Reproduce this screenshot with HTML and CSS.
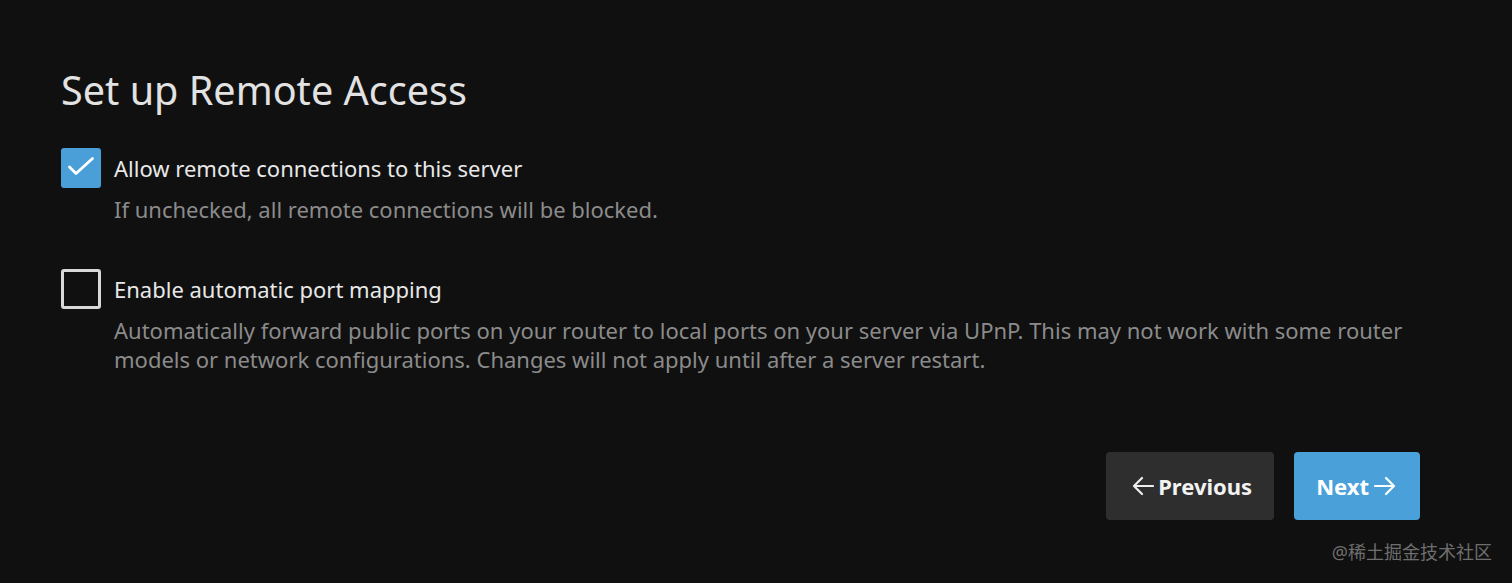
FILE: index.html
```html
<!DOCTYPE html>
<html lang="en">
<head>
    <meta charset="UTF-8">
    <title>Set up Remote Access</title>
    <link rel="stylesheet" href="styles.css">
</head>
<body>
    <div class="wizard">
        <h1>Set up Remote Access</h1>

        <div class="option first">
            <span class="box checked">
                <svg viewBox="0 0 28 28" width="28" height="28"><path d="M2.5 13l6.5 6.5L25.5 4.5" fill="none" stroke="#fff" stroke-width="2.8" stroke-linecap="round" stroke-linejoin="round"/></svg>
            </span>
            <div class="text">
                <div class="label">Allow remote connections to this server</div>
                <div class="hint">If unchecked, all remote connections will be blocked.</div>
            </div>
        </div>

        <div class="option">
            <span class="box"></span>
            <div class="text">
                <div class="label">Enable automatic port mapping</div>
                <div class="hint">Automatically forward public ports on your router to local ports on your server via UPnP. This may not work with some router models or network configurations. Changes will not apply until after a server restart.</div>
            </div>
        </div>

        <div class="actions">
            <button class="btn prev">
                <svg viewBox="0 0 22 22" width="22" height="22"><path d="M21 11H2M10 3l-8 8 8 8" fill="none" stroke="#eee" stroke-width="2.2" stroke-linecap="round" stroke-linejoin="round"/></svg>
                Previous
            </button>
            <button class="btn next">
                Next
                <svg viewBox="0 0 22 22" width="22" height="22"><path d="M1 11h19M12 3l8 8-8 8" fill="none" stroke="#fff" stroke-width="2.2" stroke-linecap="round" stroke-linejoin="round"/></svg>
            </button>
        </div>
    </div>
    <div class="mark">@稀土掘金技术社区</div>
</body>
</html>
```

FILE: styles.css
```css
html, * {
    box-sizing: border-box;
    margin: 0;
    padding: 0;
}

body {
    background: #101010;
    color: #e5e5e5;
    font-family: 'Noto Sans', sans-serif;
    height: 583px;
    overflow: hidden;
}

.wizard {
    padding: 63px 92px 0 61px;
}

h1 {
    font-size: 39.6px;
    font-weight: 400;
    line-height: 54px;
    color: #e2e2e2;
    margin-bottom: 31px;
}

.option {
    display: flex;
    gap: 13px;
}

.option.first {
    margin-bottom: 45px;
}

.box {
    flex: none;
    width: 40px;
    height: 40px;
    border: 3px solid #d8d8d8;
    border-radius: 3px;
    display: flex;
    align-items: center;
    justify-content: center;
}

.box.checked {
    background: #4a9fd8;
    border-color: #4a9fd8;
}

.label {
    font-size: 22px;
    line-height: 40px;
    color: #e8e8e8;
}

.hint {
    font-size: 22px;
    line-height: 29px;
    color: #8b8b8b;
    margin-top: 7px;
}

.actions {
    display: flex;
    justify-content: flex-end;
    gap: 20px;
    margin-top: 78px;
}

.btn {
    height: 68px;
    border: none;
    border-radius: 4px;
    font-family: 'Noto Sans', sans-serif;
    font-size: 22px;
    font-weight: 700;
    color: #f2f2f2;
    display: flex;
    align-items: center;
}

.prev {
    background: #2e2e2e;
    gap: 4px;
    padding: 0 22px 0 26px;
}

.next {
    background: #4aa1d9;
    color: #fff;
    gap: 5px;
    padding: 0 24px 0 22px;
}

.mark {
    position: absolute;
    right: 20px;
    bottom: 19px;
    font-size: 18px;
    color: #6e6e6e;
    font-family: 'Noto Sans', 'Noto Sans CJK SC', sans-serif;
}
```
